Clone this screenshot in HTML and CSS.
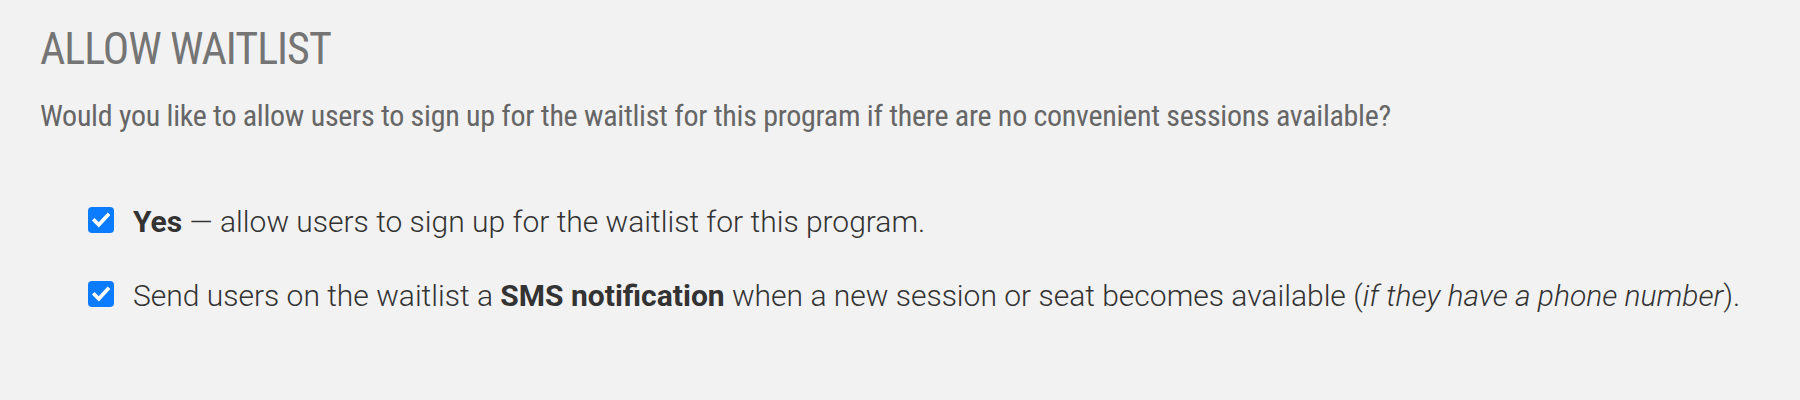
FILE: index.html
```html
<!DOCTYPE html>
<html lang="en">
<head>
<meta charset="utf-8">
<title>Allow Waitlist</title>
<link rel="stylesheet" href="styles.css">
</head>
<body>
<section class="panel">
  <h2 class="title">ALLOW WAITLIST</h2>
  <p class="question">Would you like to allow users to sign up for the waitlist for this program if there are no convenient sessions available?</p>
  <div class="options">
    <label class="option">
      <span class="box"><svg viewBox="0 0 26 26" width="26" height="26"><path d="M6.5 13.5 L10.8 17.8 L19.8 8" fill="none" stroke="#fff" stroke-width="3.6" stroke-linecap="square"/></svg></span>
      <span class="text"><strong>Yes</strong> — allow users to sign up for the waitlist for this program.</span>
    </label>
    <label class="option">
      <span class="box"><svg viewBox="0 0 26 26" width="26" height="26"><path d="M6.5 13.5 L10.8 17.8 L19.8 8" fill="none" stroke="#fff" stroke-width="3.6" stroke-linecap="square"/></svg></span>
      <span class="text">Send users on the waitlist a <strong>SMS notification</strong> when a new session or seat becomes available (<em>if they have a phone number</em>).</span>
    </label>
  </div>
</section>
</body>
</html>
```
FILE: styles.css
```css
html, body {
  margin: 0;
  padding: 0;
  background: #f2f2f2;
}
.panel {
  padding: 23px 0 0 40px;
  font-family: "Roboto Condensed", Roboto, sans-serif;
}
.title {
  margin: 0;
  font-size: 44px;
  line-height: 52px;
  font-weight: 400;
  letter-spacing: -1px;
  color: #757575;
}
.question {
  margin: 23px 0 0 0;
  font-size: 30px;
  line-height: 36px;
  font-weight: 400;
  letter-spacing: -0.28px;
  color: #666666;
}
.options {
  margin-top: 68px;
  padding-left: 48px;
  display: flex;
  flex-direction: column;
  gap: 34px;
}
.option {
  display: flex;
  align-items: flex-start;
  gap: 19px;
  font-family: Roboto, sans-serif;
  font-size: 30px;
  line-height: 40px;
  font-weight: 300;
  color: #333333;
}
.box {
  flex: none;
  width: 26px;
  height: 26px;
  margin-top: 5px;
  border-radius: 4px;
  background: #0b7bff;
  display: flex;
}
.text strong {
  font-weight: 700;
}
.text em {
  font-style: italic;
}
```
